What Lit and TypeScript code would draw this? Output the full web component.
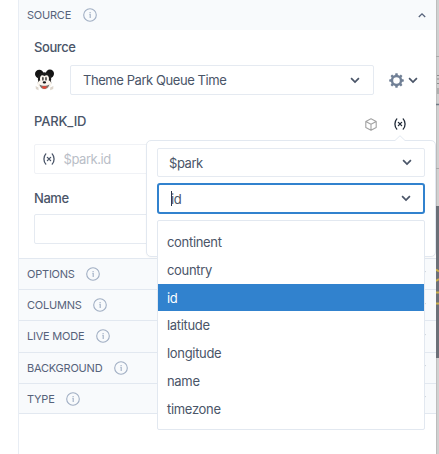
import { LitElement, html, css, svg } from "lit";
import { customElement, property } from "lit/decorators.js";

const chevron = (up = false) => html`<svg class="chev" width="10" height="7" viewBox="0 0 10 7">
  <path d=${up ? "M1.8 5 5 1.8 8.2 5" : "M1.1 1.2 5 5.1 8.9 1.2"} fill="none" stroke="currentColor" stroke-width=${up ? 1.3 : 1.7} />
</svg>`;

const variable = html`<svg width="12" height="12" viewBox="0 0 12 12" fill="none" stroke="currentColor" stroke-width="1.3" stroke-linecap="round">
  <path d="M2.8 .9C.3 3.8.3 8.2 2.8 11.1M9.2 .9c2.5 2.9 2.5 7.3 0 10.2M4.4 4.4l3.2 3.2M7.6 4.4 4.4 7.6" />
</svg>`;

@customElement("info-icon")
class InfoIcon extends LitElement {
  static styles = css`:host { display: block; width: 14px; height: 14px; color: #a0aec3; } svg { display: block; }`;
  render() {
    return html`<svg width="14" height="14" viewBox="0 0 14 14">
      <circle cx="7" cy="7" r="6.3" fill="none" stroke="currentColor" stroke-width="1.1" />
      <path d="M6.3 6.3h.9v3.6M7.1 3.9v1.1" fill="none" stroke="currentColor" stroke-width="1.1" />
    </svg>`;
  }
}

@customElement("section-bar")
class SectionBar extends LitElement {
  @property() label = "";
  @property({ type: Boolean }) open = false;
  static styles = css`
    :host { display: flex; align-items: center; box-sizing: border-box; padding: 0 10.5px 0 8px; background: #f8fafc; color: #56627a; font-size: 11px; letter-spacing: -0.22px; }
    :host([open]) { padding-right: 9.5px; }
    .label { margin-right: 11.5px; white-space: nowrap; }
    .chev { margin-left: auto; display: block; }
  `;
  render() {
    return html`<span class="label">${this.label}</span><info-icon></info-icon>${chevron(this.open)}`;
  }
}

@customElement("mouse-logo")
class MouseLogo extends LitElement {
  static styles = css`:host { display: block; width: 22px; height: 22px; } svg { display: block; }`;
  render() {
    return html`<svg width="22" height="22" viewBox="0 0 22 22">
      <ellipse cx="5.3" cy="5" rx="4.3" ry="4.2" fill="#141414" />
      <ellipse cx="15.9" cy="4.8" rx="4.1" ry="4.2" fill="#141414" />
      <path d="M4.1 12C3 6.5 6.5 3.4 10.5 3.4S18 6.5 17 12c1.2 4-2 7.7-6.5 7.7S2.9 16 4.1 12Z" fill="#3a3836" />
      <path d="M4.1 11C3.4 6.2 6.5 3.4 10.5 3.4S17.7 6.2 17 11Z" fill="#1c1c1c" />
      <path d="M10.4 7C7.3 4.5 5.2 8 6.3 11.5 4.2 12 2.4 15 4 17c1.6 1.8 3.8 3.9 6.4 3.9s4.8-2.1 6.4-3.9c1.6-2 0-5-2.1-5.5C15.9 8 13.5 4.5 10.4 7Z" fill="#fbf6ee" />
      <ellipse cx="8.9" cy="9.7" rx=".75" ry="2" fill="#282828" />
      <ellipse cx="12" cy="9.7" rx=".75" ry="2" fill="#282828" />
      <ellipse cx="10.4" cy="13.4" rx="1.7" ry="1.1" fill="#151515" />
      <path d="M5.3 15.5c3 1.8 7.2 1.8 10.2 0-1 3.2-3 4.6-5.1 4.6s-4.1-1.4-5.1-4.6Z" fill="#77716c" />
      <path d="M7.7 17.8c1.6-.7 3.8-.7 5.4 0-1 2.6-4.4 2.6-5.4 0Z" fill="#f04430" />
      <path d="M1.6 17 4.5 18.5v2.7L1.9 20ZM19.4 17 16.2 18.5v2.7l3-1.2Z" fill="#ddd5cb" />
    </svg>`;
  }
}

@customElement("app-root")
class AppRoot extends LitElement {
  sections = ["OPTIONS", "COLUMNS", "LIVE MODE", "BACKGROUND", "TYPE"];
  fields = ["continent", "country", "id", "latitude", "longitude", "name", "timezone"];

  static styles = css`
    :host { display: block; width: 439px; height: 454px; overflow: hidden; background: #fff; font-family: Inter, "Liberation Sans", sans-serif; color: #4a5568; font-size: 13px; letter-spacing: -0.43px; }
    * { box-sizing: border-box; }
    svg { display: block; flex: none; }
    .page { display: grid; grid-template-columns: 18px 418px 3px; height: 454px; }
    .panel { grid-column: 2; border-left: 1px solid #e8edf4; }
    .head { height: 30px; }
    .form { height: 227.5px; padding: 0 0 0 15px; }
    .label { height: 35px; line-height: 35px; font-weight: 500; }
    .row { display: flex; align-items: center; height: 30px; }
    .box { display: flex; align-items: center; border: 1px solid #e5eaf1; border-radius: 2px; height: 30px; background: #fff; }
    .source { width: 304px; margin-left: 14px; padding: 0 13px 0 12px; justify-content: space-between; }
    .gear { margin-left: 15px; color: #718096; }
    .gear + .chev { margin-left: 3.5px; }
    .param { display: flex; align-items: center; height: 49px; }
    .param .title { font-weight: 500; margin-right: auto; padding-top: 2px; letter-spacing: -0.15px; }
    .cube { color: #a3a3a3; margin: 9px 17px 0 0; }
    .anchor { position: relative; color: #1f2937; margin: 9px 30.5px 0 0; }
    .value { width: 260px; padding-left: 7.5px; border-color: #f0f2f6; color: #4a5568; }
    .value span { margin-left: 9px; color: #b9bec7; }
    .name { width: 260px; }
    .name-label { height: 40px; line-height: 49px; }
    .popover { position: absolute; left: -247.5px; top: 22px; width: 290px; height: 117px; padding: 7px 10px; border: 1px solid #e2e8f0; border-radius: 5px; background: #fff; color: #4a5568; box-shadow: 0 1px 2px #1a202c08; }
    .tip { position: absolute; left: 248px; top: -6px; }
    .pick { justify-content: space-between; padding: 0 12px 0 11px; height: 29px; width: 268px; }
    .focus { height: 31px; margin-top: 6px; border: 2px solid #3182ce; border-radius: 3px; padding: 0 12px 0 11px; }
    .typed { display: flex; align-items: center; }
    .caret { width: 1px; height: 15px; background: #2d3748; margin: 0 -1px 0 1px; }
    .menu { position: absolute; left: 10px; top: 79px; width: 268px; height: 210px; padding-top: 7px; border: 1px solid #e2e8f0; border-radius: 2px; background: #fff; letter-spacing: -0.32px; }
    .item { height: 27.75px; line-height: 28px; padding-left: 9px; }
    .on { background: #3182ce; color: #fff; }
    .bar { height: 31.4px; border-top: 1px solid #e2e8f0; }
    .bar:last-of-type { border-bottom: 1px solid #e2e8f0; }
    .edge { height: 454px; }
  `;

  render() {
    return html`<div class="page">
      <div class="panel">
        <section-bar class="head" label="SOURCE" open></section-bar>
        <div class="form">
          <div class="label">Source</div>
          <div class="row">
            <mouse-logo></mouse-logo>
            <div class="box source"><span>Theme Park Queue Time</span>${chevron()}</div>
            <svg class="gear" width="15" height="15" viewBox="0 0 15 15">
              <circle cx="7.5" cy="7.5" r="4.5" fill="none" stroke="currentColor" stroke-width="2.4" />
              ${[0, 45, 90, 135, 180, 225, 270, 315].map((a) => svg`<path d="M6.1 2.4 6.4.2h2.2l.3 2.2Z" fill="currentColor" transform="rotate(${a} 7.5 7.5)" />`)}
            </svg>
            ${chevron()}
          </div>
          <div class="param">
            <span class="title">PARK_ID</span>
            <svg class="cube" width="12" height="13" viewBox="0 0 12 13" fill="none" stroke="currentColor" stroke-width="1.1" stroke-linejoin="round">
              <path d="M6 .8 11.2 3.4v6L6 12.2.8 9.4v-6ZM.8 3.4 6 6.2l5.2-2.8M6 6.2v6" />
            </svg>
            <div class="anchor">${variable}
              <div class="popover">
                <svg class="tip" width="10" height="7" viewBox="0 0 10 7"><path d="M0 5.5 5 .7l5 4.8V7H0Z" fill="#fff" /><path d="M0 5.5 5 .7l5 4.8" fill="none" stroke="#e2e8f0" /></svg>
                <div class="box pick"><span>$park</span>${chevron()}</div>
                <div class="box pick focus"><span class="typed"><i class="caret"></i>id</span>${chevron()}</div>
                <div class="menu">${this.fields.map((f) => html`<div class="item ${f === "id" ? "on" : ""}">${f}</div>`)}</div>
              </div>
            </div>
          </div>
          <div class="box value">${variable}<span>$park.id</span></div>
          <div class="label name-label">Name</div>
          <div class="box name"></div>
        </div>
        ${this.sections.map((s) => html`<section-bar class="bar" label=${s}></section-bar>`)}
      </div>
      <svg class="edge" width="3" height="454" viewBox="0 0 3 454">
        <path d="M0 0h3v454H0Z" fill="#d0d0d0" />
        <path d="M0 0h1v454H0Z" fill="#bdbdbd" />
        <path d="M0 206h3v152H0Z" fill="#6b7078" />
        <path d="M0 56.5h3M0 168.5h3" stroke="#a9a9a9" />
        <path d="M1 75.5h2M1 79h2M1 83.5h2M2 88v6" stroke="#8d8d8d" />
        <path d="M0 104.5h3" stroke="#707b86" stroke-width="1.5" />
        <path d="M0 269.5l3 2M0 281l3-2M0 292.5h3M0 303.5h3" stroke="#c9ae4c" stroke-width="2" />
      </svg>
    </div>`;
  }
}
